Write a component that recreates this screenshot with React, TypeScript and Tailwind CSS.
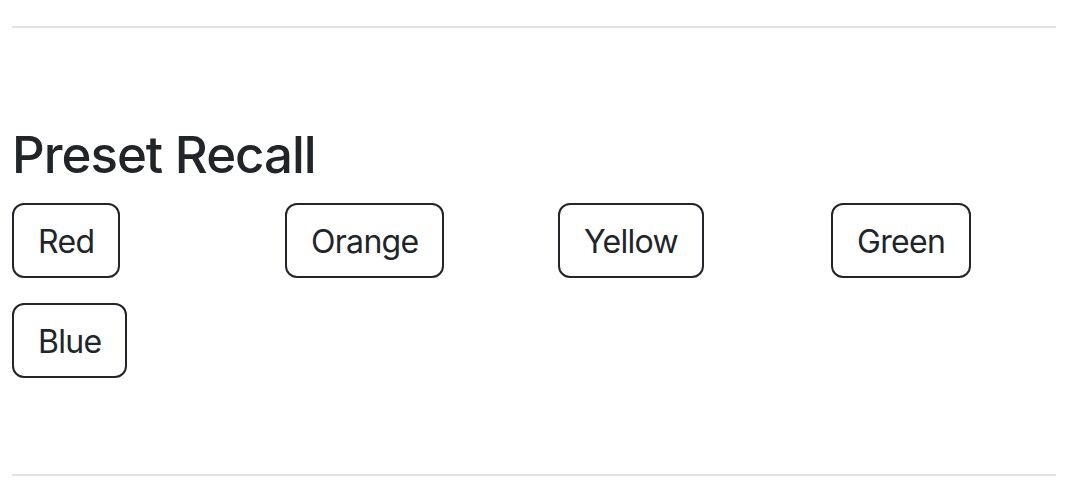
import React from "react";

const presets = ["Red", "Orange", "Yellow", "Green", "Blue"];

export default function App() {
  return (
    <div
      className="w-[1070px] h-[492px] bg-white text-[#212529] pl-[12px] pr-[14px] overflow-hidden"
      style={{ fontFamily: "Inter, 'Noto Sans', sans-serif" }}
    >
      <div className="pt-[26px]">
        <div className="h-[2px] bg-[#dee2e6]" />
      </div>
      <h2 className="mt-[96px] text-[51px] leading-[62px] font-medium tracking-[-1px] mb-[17px]">
        Preset Recall
      </h2>
      <div className="grid grid-cols-[273px_273px_273px_1fr] gap-y-[25px]">
        {presets.map((p) => (
          <div key={p}>
            <button className="h-[75px] pt-[3px] px-[24px] border-2 border-[#212529] rounded-[12px] text-[32px] leading-[48px] tracking-[-0.7px] text-[#212529] bg-white">
              {p}
            </button>
          </div>
        ))}
      </div>
      <div className="mt-[96px] h-[2px] bg-[#dee2e6]" />
    </div>
  );
}
